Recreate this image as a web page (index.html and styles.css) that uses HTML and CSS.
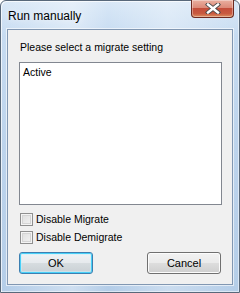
FILE: index.html
```html
<!DOCTYPE html>
<html>
<head>
<meta charset="utf-8">
<link rel="stylesheet" href="styles.css">
</head>
<body>
<div class="window">
  <div class="titlebar">
    <span class="title">Run manually</span>
    <button class="close" aria-label="Close">
      <svg width="16" height="11" viewBox="0 0 16 11">
        <path d="M3 1.5 L13 9.5 M13 1.5 L3 9.5" stroke="#4a4a4a" stroke-width="4.2" stroke-linecap="square" fill="none"/>
        <path d="M3 1.5 L13 9.5 M13 1.5 L3 9.5" stroke="#ffffff" stroke-width="2.4" stroke-linecap="square" fill="none"/>
      </svg>
    </button>
  </div>
  <div class="client">
    <div class="prompt">Please select a migrate setting</div>
    <div class="listbox">
      <div class="item">Active</div>
    </div>
    <label class="check"><span class="box"></span>Disable Migrate</label>
    <label class="check"><span class="box"></span>Disable Demigrate</label>
    <div class="buttons">
      <button class="btn default">OK</button>
      <button class="btn">Cancel</button>
    </div>
  </div>
</div>
</body>
</html>
```
FILE: styles.css
```css
html, body {
  margin: 0;
  padding: 0;
}
body {
  width: 240px;
  height: 293px;
  overflow: hidden;
  font-family: "Liberation Sans", Arial, sans-serif;
  font-size: 10.5px;
  color: #000;
}
.window {
  box-sizing: border-box;
  width: 240px;
  height: 293px;
  border: 1px solid #58687a;
  border-radius: 6px 6px 0 0;
  background:
    linear-gradient(90deg, rgba(255,255,255,0.0) 0%, rgba(255,255,255,0.35) 30%, rgba(255,255,255,0.0) 45%, rgba(255,255,255,0.3) 70%, rgba(255,255,255,0) 100%),
    linear-gradient(180deg, #d9e8f7 0%, #c6dbf1 12%, #bcd3ec 50%, #b4cde8 100%);
  display: flex;
  flex-direction: column;
  box-shadow: inset 1px 1px 0 rgba(255,255,255,0.7), inset -1px -1px 0 rgba(255,255,255,0.5);
}
.titlebar {
  height: 28px;
  display: flex;
  align-items: flex-start;
  justify-content: space-between;
  padding-left: 7px;
}
.title {
  font-size: 12px;
  margin-top: 8px;
  color: #000;
  text-shadow: 0 0 6px rgba(255,255,255,0.9);
}
.close {
  width: 43px;
  height: 18px;
  margin-top: -1px;
  margin-right: 5px;
  padding: 0;
  border: 1px solid #6d2a20;
  border-top: none;
  border-radius: 0 0 4px 4px;
  background: linear-gradient(180deg, #eab0a0 0%, #dc8a78 45%, #c44e3a 50%, #c85a40 80%, #dc9060 100%);
  box-shadow: inset 0 0 0 1px rgba(255,255,255,0.35);
  display: flex;
  align-items: center;
  justify-content: center;
}
.close svg { display: block; }
.client {
  box-sizing: border-box;
  margin: 0 6px 7px 6px;
  flex: 1;
  border: 1px solid #8197b2;
  background: #f0f0f0;
  display: flex;
  flex-direction: column;
  padding: 11px 10px 0 11px;
  box-shadow: 0 0 0 1px rgba(255,255,255,0.6);
}
.prompt {
  line-height: 13px;
  height: 13px;
  margin-left: 1px;
}
.listbox {
  box-sizing: border-box;
  margin-top: 8px;
  width: 203px;
  height: 143px;
  border: 1px solid #828790;
  background: #fff;
  padding: 3px 2px;
}
.item {
  line-height: 13px;
  padding-left: 1px;
}
.check {
  display: flex;
  align-items: center;
  height: 13px;
  line-height: 13px;
  margin-left: 1px;
}
.check:first-of-type { margin-top: 8px; }
.check + .check { margin-top: 5px; }
.box {
  box-sizing: border-box;
  width: 13px;
  height: 13px;
  border: 1px solid #8f8f8f;
  background: linear-gradient(135deg, #dcdcdc 0%, #f4f4f4 100%);
  box-shadow: inset 0 0 0 1px #f4f4f4, inset 0 0 0 2px #d4d4d4;
  margin-right: 3px;
}
.buttons {
  display: flex;
  justify-content: space-between;
  width: 202px;
  margin-top: 8px;
}
.btn {
  box-sizing: border-box;
  width: 74px;
  height: 22px;
  border: 1px solid #707070;
  border-radius: 3px;
  background: linear-gradient(180deg, #f2f2f2 0%, #ebebeb 48%, #dddddd 52%, #cfcfcf 100%);
  box-shadow: inset 0 0 0 1px #fcfcfc;
  font-family: "Liberation Sans", Arial, sans-serif;
  font-size: 11px;
  color: #000;
  padding: 0;
}
.btn.default {
  border-color: #3c7fb1;
  box-shadow: inset 0 0 0 1px #48d0f8, inset 0 0 0 2px rgba(200,240,252,0.5);
  background: linear-gradient(180deg, #f0f3f5 0%, #e6eaed 48%, #d6dcdf 52%, #c9d0d4 100%);
}
```
